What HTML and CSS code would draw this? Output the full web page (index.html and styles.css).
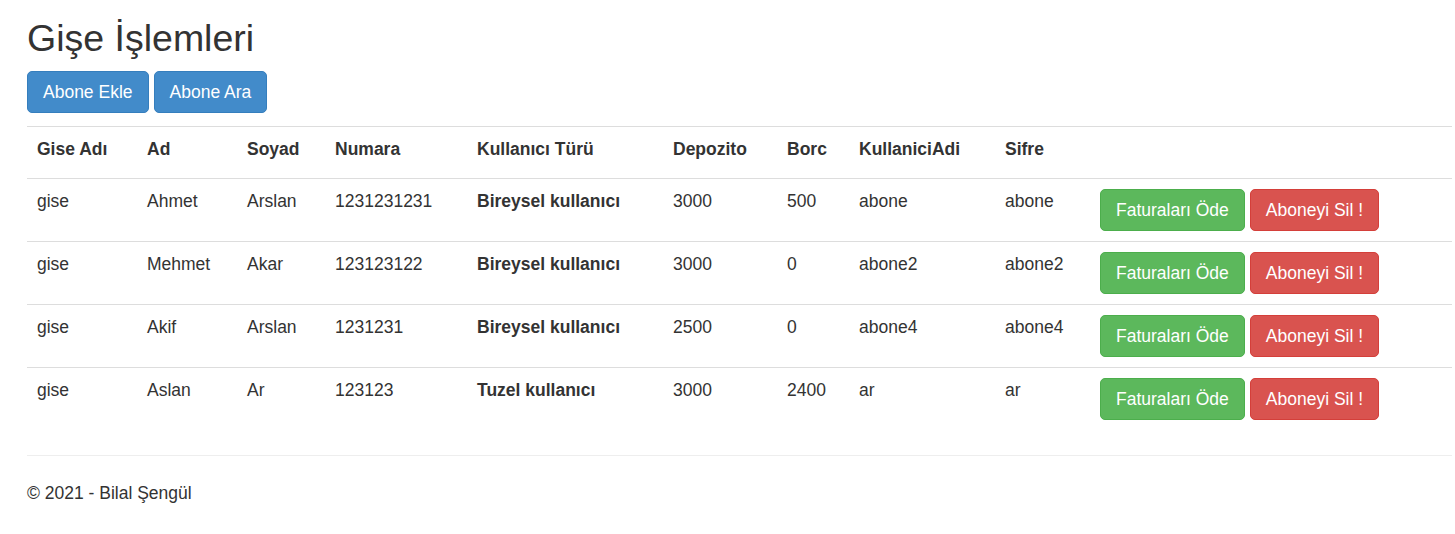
FILE: index.html
```html
<!DOCTYPE html>
<html lang="tr">
<head>
<meta charset="utf-8">
<title>Gişe İşlemleri</title>
<link rel="stylesheet" href="styles.css">
</head>
<body>
<div class="container">
  <h2 class="title">Gişe İşlemleri</h2>
  <div class="actions">
    <a class="btn btn-primary" href="#">Abone Ekle</a>
    <a class="btn btn-primary" href="#">Abone Ara</a>
  </div>
  <table class="table">
    <colgroup>
      <col class="c1"><col class="c2"><col class="c3"><col class="c4"><col class="c5">
      <col class="c6"><col class="c7"><col class="c8"><col class="c9"><col class="c10">
    </colgroup>
    <tr class="head">
      <th>Gise Adı</th><th>Ad</th><th>Soyad</th><th>Numara</th><th>Kullanıcı Türü</th>
      <th>Depozito</th><th>Borc</th><th>KullaniciAdi</th><th>Sifre</th><th></th>
    </tr>
    <tr>
      <td>gise</td><td>Ahmet</td><td>Arslan</td><td>1231231231</td><td><strong>Bireysel kullanıcı</strong></td>
      <td>3000</td><td>500</td><td>abone</td><td>abone</td>
      <td><div class="row-actions"><a class="btn btn-success" href="#">Faturaları Öde</a><a class="btn btn-danger" href="#">Aboneyi Sil !</a></div></td>
    </tr>
    <tr>
      <td>gise</td><td>Mehmet</td><td>Akar</td><td>123123122</td><td><strong>Bireysel kullanıcı</strong></td>
      <td>3000</td><td>0</td><td>abone2</td><td>abone2</td>
      <td><div class="row-actions"><a class="btn btn-success" href="#">Faturaları Öde</a><a class="btn btn-danger" href="#">Aboneyi Sil !</a></div></td>
    </tr>
    <tr>
      <td>gise</td><td>Akif</td><td>Arslan</td><td>1231231</td><td><strong>Bireysel kullanıcı</strong></td>
      <td>2500</td><td>0</td><td>abone4</td><td>abone4</td>
      <td><div class="row-actions"><a class="btn btn-success" href="#">Faturaları Öde</a><a class="btn btn-danger" href="#">Aboneyi Sil !</a></div></td>
    </tr>
    <tr>
      <td>gise</td><td>Aslan</td><td>Ar</td><td>123123</td><td><strong>Tuzel kullanıcı</strong></td>
      <td>3000</td><td>2400</td><td>ar</td><td>ar</td>
      <td><div class="row-actions"><a class="btn btn-success" href="#">Faturaları Öde</a><a class="btn btn-danger" href="#">Aboneyi Sil !</a></div></td>
    </tr>
  </table>
  <hr class="divider">
  <footer class="footer">
    <p>© 2021 - Bilal Şengül</p>
  </footer>
</div>
</body>
</html>
```

FILE: styles.css
```css
* { box-sizing: border-box; }

html, body {
  margin: 0;
  padding: 0;
  background: #fff;
}

body {
  font-family: "Liberation Sans", Arial, Helvetica, sans-serif;
  font-size: 17.5px;
  line-height: 25px;
  color: #333;
}

.container {
  padding: 0 3px 0 27px;
}

.title {
  font-size: 37.5px;
  font-weight: 500;
  line-height: 1.1;
  margin: 18px 0 12px;
  color: #333;
}

.actions {
  display: flex;
  gap: 5px;
  margin: 0 0 13px;
}

.btn {
  display: inline-block;
  padding: 7.5px 15px;
  font-size: 17.5px;
  line-height: 25px;
  border: 1px solid transparent;
  border-radius: 5px;
  color: #fff;
  text-decoration: none;
  white-space: nowrap;
}

.btn-primary { background: #428bca; border-color: #357ebd; }
.btn-success { background: #5cb85c; border-color: #4cae4c; }
.btn-danger  { background: #d9534f; border-color: #d43f3a; }

.table {
  width: 100%;
  border-collapse: collapse;
  table-layout: fixed;
  margin-bottom: 25px;
}

.table th,
.table td {
  padding: 10px;
  line-height: 25px;
  text-align: left;
  vertical-align: top;
  border-top: 1px solid #ddd;
  white-space: nowrap;
}

.table th { font-weight: bold; }
.table .head th { padding-bottom: 16px; }

.c1 { width: 110px; }
.c2 { width: 100px; }
.c3 { width: 88px; }
.c4 { width: 142px; }
.c5 { width: 196px; }
.c6 { width: 114px; }
.c7 { width: 72px; }
.c8 { width: 146px; }
.c9 { width: 95px; }

.row-actions {
  display: flex;
  gap: 5px;
}

.divider {
  margin: 25px 0;
  border: 0;
  border-top: 1px solid #eee;
}

.footer p {
  margin: 0 0 12.5px;
}
```
